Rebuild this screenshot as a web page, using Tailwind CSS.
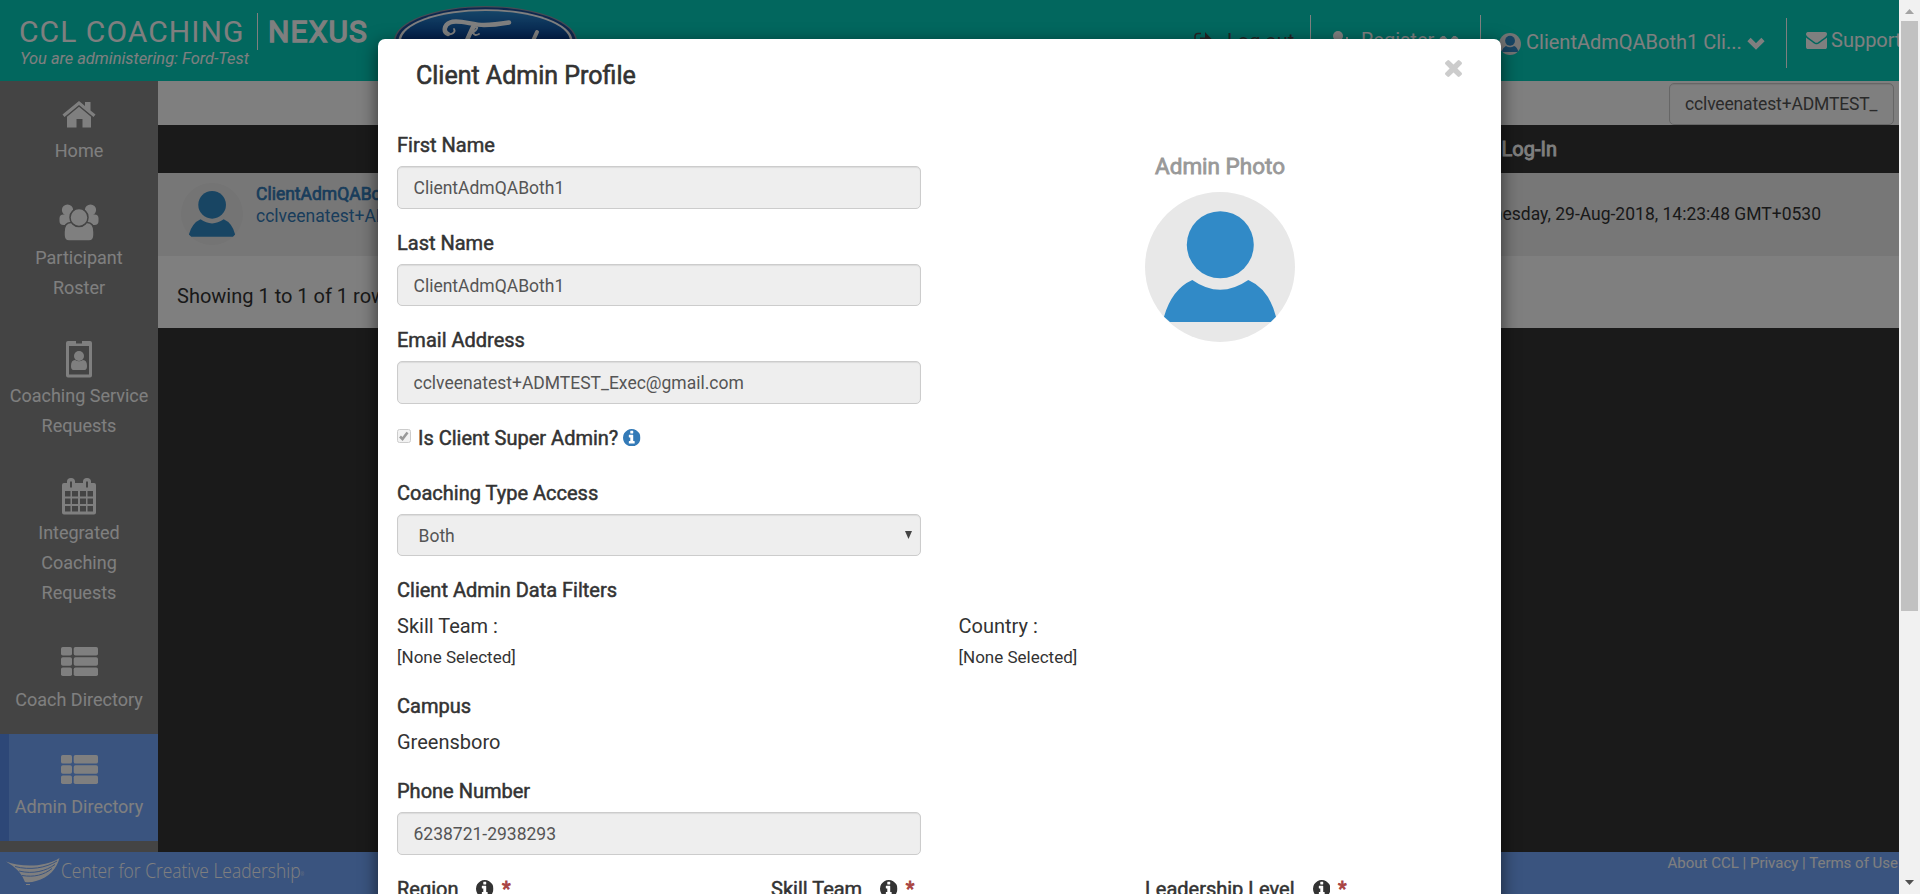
<!DOCTYPE html>
<html lang="en">
<head>
<meta charset="utf-8">
<title>Client Admin Profile</title>
<script src="https://cdn.jsdelivr.net/npm/@tailwindcss/browser@4"></script>
</head>
<body class="flex h-[894px] w-[1920px] overflow-hidden bg-[#343434] text-[#333]" style="font-family:Roboto,sans-serif">
<svg class="hidden">
  <symbol id="info" viewBox="128 128 1536 1536"><path d="M1152 1376v-160q0-14-9-23t-23-9h-96V672q0-14-9-23t-23-9H672q-14 0-23 9t-9 23v160q0 14 9 23t23 9h96v320h-96q-14 0-23 9t-9 23v160q0 14 9 23t23 9h448q14 0 23-9t9-23zm-128-896V320q0-14-9-23t-23-9H800q-14 0-23 9t-9 23v160q0 14 9 23t23 9h192q14 0 23-9t9-23zm640 416q0 209-103 385.500t-279.500 279.500-385.500 103-385.500-103-279.500-279.500-103-385.500 103-385.500 279.500-279.500 385.500-103 385.500 103 279.500 279.500 103 385.500z"/></symbol>
  <symbol id="list" viewBox="0 0 37 29"><rect width="11" height="8.600" rx="1.800"/><rect x="12.700" width="24.300" height="8.600" rx="1.800"/><rect y="10.200" width="11" height="8.600" rx="1.800"/><rect x="12.700" y="10.200" width="24.300" height="8.600" rx="1.800"/><rect y="20.400" width="11" height="8.600" rx="1.800"/><rect x="12.700" y="20.400" width="24.300" height="8.600" rx="1.800"/></symbol>
  <symbol id="person" viewBox="0 0 150 150"><circle cx="75" cy="75" r="75" fill="#e8e8e8"/><circle cx="75.300" cy="52.700" r="33.500" fill="#318ac7"/><path d="M47.300 88Q75 107.500 103.300 88Q124 97 131 124.700L125.700 130H25L19 124.700Q27 97 47.300 88Z" fill="#318ac7"/></symbol>
  <symbol id="chevron" viewBox="0 0 18 13"><path d="M2 2.500L9 9.500L16 2.500" fill="none" stroke="currentColor" stroke-width="4.600"/></symbol>
</svg>

<div class="relative h-full w-[1899px] shrink-0 overflow-hidden">
  <div class="flex h-full flex-col">
    <!-- Top bar -->
    <header class="flex h-[81px] shrink-0 bg-[#04cebd] text-white">
      <div class="w-[394px] shrink-0 pl-[19px] pt-[13px]">
        <div class="flex h-[37px] items-center whitespace-nowrap text-[30px]">
          <span class="w-[238px] tracking-[1.05px]">CCL COACHING</span>
          <span class="h-[37px] w-px bg-white"></span>
          <span class="pl-[10px] tracking-[1.1px] [-webkit-text-stroke:1.3px_white]">NEXUS</span>
        </div>
        <div class="-mt-px pl-px text-[16.4px] leading-[20px] italic">You are administering: Ford-Test</div>
      </div>
      <svg class="mt-[6px] h-[70px] w-[183px] shrink-0" viewBox="0 0 183 70">
        <defs><linearGradient id="fg" x1="0" y1="0" x2="0" y2="1"><stop offset="0" stop-color="#2a8ad0"/><stop offset=".5" stop-color="#043a90"/><stop offset="1" stop-color="#012a6c"/></linearGradient></defs>
        <ellipse cx="91.500" cy="35" rx="91.500" ry="35" fill="#8d95a8"/>
        <ellipse cx="91.500" cy="35" rx="90" ry="33.800" fill="#1c4f9c"/>
        <ellipse cx="91.500" cy="35" rx="87" ry="31.800" fill="#fff"/>
        <ellipse cx="91.500" cy="35" rx="84.500" ry="30" fill="url(#fg)"/>
        <g fill="none" stroke="#fff" stroke-linecap="round">
          <path d="M54 28C49 26 50 19 56 16.500C64 13 78 19 90 19C99 19 106 18 115 16.500" stroke-width="4.500"/>
          <path d="M54 28C58 29 62 26 60 23" stroke-width="1.800"/>
          <path d="M80 19C76 26 72 38 66 50" stroke-width="4.500"/>
          <path d="M74 29C80 27 86 21 82 21C78 23 78 32 85 28" stroke-width="1.800"/>
          <path d="M143 26L132 50" stroke-width="4"/>
        </g>
      </svg>
      <nav class="ml-[617px] flex whitespace-nowrap text-[20px] leading-[30px]">
        <div class="flex w-[116px] shrink-0 pt-[26px] text-[#4a4a4a]">
          <svg class="mt-[6px] h-[18px] w-[20px] shrink-0" viewBox="0 0 20 18"><path d="M7 1.500H4Q1 1.500 1 4.500V13Q1 16 4 16H7" fill="none" stroke="currentColor" stroke-width="1.600"/><path d="M11 0L19 8.500L11 17V12H6V5.500H11Z" fill="currentColor"/></svg>
          <span class="ml-[13px]">Log out</span>
        </div>
        <div class="mt-[15px] flex h-[50px] w-[170px] shrink-0 border-l border-white pt-[10px]">
          <svg class="ml-[22px] mt-[6px] h-[18px] w-[22px] shrink-0" viewBox="0 0 22 18" fill="currentColor"><circle cx="5" cy="5" r="5"/><path d="M0 18Q0 10 5 10T11 18ZM13 6H15V9H18V11H15V14H13V11H10V9H13Z"/></svg>
          <span class="ml-[6px]">Register</span>
          <svg class="ml-[5px] mt-[11px] h-[13px] w-[20px] shrink-0" viewBox="0 0 20 13"><path d="M1.500 3.500L4.500 1L10 7L15.500 1L18.500 3.500" fill="none" stroke="currentColor" stroke-width="3"/></svg>
        </div>
        <div class="mt-[15px] flex h-[50px] w-[306px] shrink-0 border-l border-white pt-[12px]">
          <svg class="ml-[18px] mt-[6px] h-[22px] w-[22px] shrink-0"><use href="#person"/></svg>
          <span class="ml-[5px]">ClientAdmQABoth1 Cli...</span>
          <svg class="ml-[5px] mt-[10px] h-[13px] w-[18px] shrink-0"><use href="#chevron"/></svg>
        </div>
        <div class="mt-[18px] flex h-[50px] w-[113px] shrink-0 border-l border-white pt-[7px]">
          <svg class="ml-[19px] mt-[7px] h-[17px] w-[21px] shrink-0" viewBox="0 256 1792 1408" preserveAspectRatio="none" fill="currentColor"><path d="M1792 710v794q0 66-47 113t-113 47H160q-66 0-113-47T0 1504V710q44 49 101 87 362 246 497 345 57 42 92.500 65.500t94.500 48 110 24.500h2q51 0 110-24.500t94.500-48 92.500-65.500q170-123 498-345 57-39 100-87zm0-294q0 79-49 151t-122 123q-376 261-468 325-10 7-42.500 31t-54 38.500-52 32.500-57.500 27-50 9h-2q-23 0-50-9t-57.500-27-52-32.500-54-38.500-42.500-31q-91-64-262-182.500T172 690q-62-42-117-115.500T0 438q0-78 41.500-130T160 256h1472q65 0 112.500 47t47.500 113z"/></svg>
          <span class="ml-[4px]">Support</span>
        </div>
      </nav>
    </header>

    <div class="flex h-[771px] shrink-0">
      <!-- Side navigation -->
      <aside class="flex w-[158px] shrink-0 flex-col bg-[#888] text-center text-[18px] leading-[30px] text-white">
        <a class="flex flex-col items-center pb-[19px] pt-[13px]">
          <svg class="mb-[2px] h-[40px] w-[34px]" viewBox="0 -7 34 40" fill="currentColor"><path d="M17 0L23 5V1H28.500V9.500L33.500 13.500L31.500 16L17 4L2.500 16L.5 13.500Z"/><path d="M17 5.800L29 15.800V26.500H20.500V18H14.500V26.500H5V15.800Z"/></svg>
          <span>Home</span>
        </a>
        <a class="flex flex-col items-center pb-[19px] pt-[17px]">
          <svg class="mb-[1px] h-[40px] w-[40px]" viewBox="0 -2 40 40"><g fill="currentColor"><circle cx="8.500" cy="6" r="5.600"/><circle cx="31.500" cy="6" r="5.600"/><rect x=".5" y="10.500" width="13" height="10.500" rx="4"/><rect x="26.500" y="10.500" width="13" height="10.500" rx="4"/></g><g fill="currentColor" stroke="#888" stroke-width="1.500"><path d="M5 31V28Q5 18.500 12 18.500H28Q35 18.500 35 28V31Q35 37 30 37H10Q5 37 5 31Z"/><circle cx="20" cy="13.500" r="9"/></g></svg>
          <span>Participant<br>Roster</span>
        </a>
        <a class="flex flex-col items-center pb-[19px] pt-[17px]">
          <svg class="mb-[2px] h-[40px] w-[26px]" viewBox="0 -2 26 40"><path fill="currentColor" fill-rule="evenodd" d="M2 0H10V2.500H16V0H24Q26 0 26 2V34.500Q26 36.500 24 36.500H2Q0 36.500 0 34.500V2Q0 0 2 0ZM3 5V33.500H23V5Z"/><circle cx="13" cy="15" r="5" fill="currentColor"/><path fill="currentColor" d="M5 25Q5 19 9 19Q13 21.500 17 19Q21 19 21 25Q21 29 18.500 29H7.500Q5 29 5 25Z"/></svg>
          <span>Coaching Service<br>Requests</span>
        </a>
        <a class="flex flex-col items-center pb-[18px] pt-[16px]">
          <svg class="mb-[1px] h-[40px] w-[34px]" viewBox="0 -2 34 40"><path fill="currentColor" fill-rule="evenodd" d="M2 5H5V3.500Q5 0 9 0T13 3.500V5H21V3.500Q21 0 25 0T29 3.500V5H32Q34 5 34 7V34.500Q34 36.500 32 36.500H2Q0 36.500 0 34.500V7Q0 5 2 5ZM8 3.500V9.500H10V3.500ZM24 3.500V9.500H26V3.500ZM3 13V18.500H8.500V13ZM10 13V18.500H16V13ZM18 13V18.500H24V13ZM25.500 13V18.500H31V13ZM3 20.500V26H8.500V20.500ZM10 20.500V26H16V20.500ZM18 20.500V26H24V20.500ZM25.500 20.500V26H31V20.500ZM3 28V33.500H8.500V28ZM10 28V33.500H16V28ZM18 28V33.500H24V28ZM25.500 28V33.500H31V28Z"/></svg>
          <span class="pt-px">Integrated<br>Coaching<br>Requests</span>
        </a>
        <a class="flex flex-col items-center pb-[19px] pt-[21px]">
          <svg class="mb-[9px] h-[29px] w-[37px]" fill="currentColor"><use href="#list"/></svg>
          <span>Coach Directory</span>
        </a>
        <a class="flex h-[107px] flex-col items-center border-l-9 border-[#5a8fee] bg-[#74a8fe] pr-[9px] pt-[21px]">
          <svg class="mb-[8px] h-[29px] w-[37px] shrink-0" fill="currentColor"><use href="#list"/></svg>
          <span>Admin Directory</span>
        </a>
      </aside>

      <!-- Directory table -->
      <main class="flex-1">
        <div class="flex h-[44px] justify-end bg-white pr-[5px] pt-[2px]">
          <div class="flex h-[42px] w-[225px] items-center rounded-[5px] border border-[#ccc] pl-[15px] text-[17.5px] tracking-[-0.15px] text-[#555] shadow-[inset_0_1px_1px_rgba(0,0,0,.08)]">cclveenatest+ADMTEST_</div>
        </div>
        <div class="flex h-[48px] items-center justify-end bg-[#343434] pr-[342px] text-[20px] text-white"><span class="[-webkit-text-stroke:0.8px_white]">Last Log-In</span></div>
        <div class="flex h-[83px] bg-[#efefef] pl-[23px] text-[17.5px]">
          <svg class="mt-[10px] h-[62px] w-[62px]"><use href="#person"/></svg>
          <div class="ml-[13px] mt-[10px] leading-[22px] text-[#337ab7]"><div class="[-webkit-text-stroke:0.7px_#337ab7]">ClientAdmQABoth1</div><div>cclveenatest+ADMTEST_Exec@gmail.com</div></div>
          <div class="ml-auto pr-[78px] pt-[30px] leading-[22px]">Wednesday, 29-Aug-2018, 14:23:48 GMT+0530</div>
        </div>
        <div class="h-[72px] bg-white pl-[19px] pt-[25px] text-[20px] leading-[30px]">Showing 1 to 1 of 1 rows</div>
      </main>
    </div>

    <!-- Footer -->
    <footer class="flex h-[42px] shrink-0 justify-between bg-[#74a8fe] text-white">
      <div class="flex pl-[6px]">
        <svg class="mt-[6px] h-[28px] w-[54px]" viewBox="0 0 54 28"><path fill="currentColor" d="M0 3.500C14 9 38 10 53.500 0C51 10 43 20 30 23Q24 25 19 24Q15 12 0 3.500Z"/><g fill="none" stroke="#74a8fe"><path d="M9 8.500C24 12.500 40 10 51 3"/><path d="M13 13C27 16.500 40 13 49 6.500"/><path d="M16 17.500C28 19.500 38 17 46 10.500"/></g><path stroke="currentColor" d="M20 26.500H24"/></svg>
        <span class="ml-px mt-[3px] inline-block h-[30px] origin-left scale-x-[.85] text-[20.5px] leading-[30px] font-light whitespace-nowrap" style="font-family:'Open Sans',sans-serif">Center for Creative Leadership<sup class="text-[5px]">®</sup></span>
      </div>
      <div class="pr-[1px] pt-[1px] text-[15px] leading-[20px]">About CCL | Privacy | Terms of Use</div>
    </footer>
  </div>

  <!-- Dimmed backdrop -->
  <div class="absolute inset-0 bg-black/50"></div>

  <!-- Profile dialog -->
  <section class="absolute left-[378px] top-[39px] h-[900px] w-[1123px] rounded-[7px] bg-white px-[19px] shadow-[0_5px_18px_rgba(0,0,0,.6)]">
    <div class="flex justify-between pl-[19px] pr-[20px] pt-[18px]">
      <h1 class="text-[25px] leading-[37px] [-webkit-text-stroke:0.6px_#333]">Client Admin Profile</h1>
      <svg class="mt-[3px] h-[17px] w-[17px] text-[#ccc]" viewBox="302 366 1188 1188" fill="currentColor"><path d="M1490 1322q0 40-28 68l-136 136q-28 28-68 28t-68-28l-294-294-294 294q-28 28-68 28t-68-28l-136-136q-28-28-28-68t28-68l294-294-294-294q-28-28-28-68t28-68l136-136q28-28 68-28t68 28l294 294 294-294q28-28 68-28t68 28l136 136q28 28 28 68t-28 68l-294 294 294 294q28 28 28 68z"/></svg>
    </div>
    <div class="flex pt-[36px]">
      <div class="w-[524px] text-[20px] leading-[30px]">
        <div class="[-webkit-text-stroke:0.5px_#333]">First Name</div>
        <div class="mt-[6px] flex h-[42.5px] items-center rounded-[5px] border border-[#ccc] bg-[#eee] pl-[15.5px] pt-[2px] text-[17.5px] text-[#555] shadow-[inset_0_1px_1px_rgba(0,0,0,.08)]">ClientAdmQABoth1</div>
        <div class="mt-[19px] [-webkit-text-stroke:0.5px_#333]">Last Name</div>
        <div class="mt-[6px] flex h-[42.5px] items-center rounded-[5px] border border-[#ccc] bg-[#eee] pl-[15.5px] pt-[2px] text-[17.5px] text-[#555] shadow-[inset_0_1px_1px_rgba(0,0,0,.08)]">ClientAdmQABoth1</div>
        <div class="mt-[19px] [-webkit-text-stroke:0.5px_#333]">Email Address</div>
        <div class="mt-[6px] flex h-[42.5px] items-center rounded-[5px] border border-[#ccc] bg-[#eee] pl-[15.5px] pt-[2px] text-[17.5px] text-[#555] shadow-[inset_0_1px_1px_rgba(0,0,0,.08)]">cclveenatest+ADMTEST_Exec@gmail.com</div>
        <div class="mt-[19px] flex">
          <svg class="mt-[6px] h-[14px] w-[14px]" viewBox="0 0 14 14"><rect x=".5" y=".5" width="13" height="13" rx="2" fill="#f2f2f2" stroke="#ccc"/><path d="M3 7.500L5.500 10L10.500 3.500" fill="none" stroke="#999" stroke-width="2.600"/></svg>
          <span class="ml-[7px] [-webkit-text-stroke:0.5px_#333]">Is Client Super Admin?</span>
          <svg class="ml-[5px] mt-[6px] h-[17.500px] w-[17.500px] text-[#337ab7]" fill="currentColor"><use href="#info"/></svg>
        </div>
        <div class="mt-[25px] [-webkit-text-stroke:0.5px_#333]">Coaching Type Access</div>
        <div class="mt-[6px] flex h-[42.5px] items-center justify-between rounded-[5px] border border-[#ccc] bg-[#eee] pl-[20.5px] pr-[8px] pt-[2px] text-[17.5px] text-[#555] shadow-[inset_0_1px_1px_rgba(0,0,0,.08)]"><span>Both</span><svg class="-mt-px h-[8px] w-[7px]" viewBox="0 0 7 8"><path d="M0 0H7L3.500 8Z" fill="#444"/></svg></div>
      </div>
      <div class="ml-[224px] flex w-[150px] flex-col items-center pt-[21px]">
        <div class="whitespace-nowrap text-[22.5px] leading-[30px] text-[#999] [-webkit-text-stroke:0.8px_#999]">Admin Photo</div>
        <svg class="mt-[11px] h-[150px] w-[150px]"><use href="#person"/></svg>
      </div>
    </div>
    <div class="mt-[19px] text-[20px] leading-[30px]">
      <div class="[-webkit-text-stroke:0.5px_#333]">Client Admin Data Filters</div>
      <div class="mt-[6px] grid grid-cols-[561.5px_1fr]">
        <div>Skill Team :<div class="mt-[4px] text-[17px] leading-[24px]">[None Selected]</div></div>
        <div>Country :<div class="mt-[4px] text-[17px] leading-[24px]">[None Selected]</div></div>
      </div>
      <div class="mt-[22px] [-webkit-text-stroke:0.5px_#333]">Campus</div>
      <div class="mt-[6px]">Greensboro</div>
      <div class="mt-[19px] [-webkit-text-stroke:0.5px_#333]">Phone Number</div>
      <div class="mt-[6px] flex h-[42.5px] w-[524px] items-center rounded-[5px] border border-[#ccc] bg-[#eee] pl-[15.5px] pt-[2px] text-[17.5px] text-[#555] shadow-[inset_0_1px_1px_rgba(0,0,0,.08)]">6238721-2938293</div>
      <div class="mt-[19px] grid grid-cols-[374px_374px_1fr]">
        <div class="flex"><span class="[-webkit-text-stroke:0.5px_#333]">Region</span><svg class="ml-[18px] mt-[6px] h-[17.500px] w-[17.500px]" fill="#333"><use href="#info"/></svg><span class="ml-[8px] text-[#a94442] [-webkit-text-stroke:0.8px_#a94442]">*</span></div>
        <div class="flex"><span class="[-webkit-text-stroke:0.5px_#333]">Skill Team</span><svg class="ml-[18px] mt-[6px] h-[17.500px] w-[17.500px]" fill="#333"><use href="#info"/></svg><span class="ml-[8px] text-[#a94442] [-webkit-text-stroke:0.8px_#a94442]">*</span></div>
        <div class="flex"><span class="[-webkit-text-stroke:0.5px_#333]">Leadership Level</span><svg class="ml-[18px] mt-[6px] h-[17.500px] w-[17.500px]" fill="#333"><use href="#info"/></svg><span class="ml-[8px] text-[#a94442] [-webkit-text-stroke:0.8px_#a94442]">*</span></div>
      </div>
    </div>
  </section>
</div>

<!-- Scrollbar -->
<div class="flex w-[21px] shrink-0 flex-col items-center bg-[#f1f1f1]">
  <svg class="h-[21px] w-[9px]" viewBox="0 0 9 21"><path d="M0 14L4.500 9L9 14Z" fill="#a3a3a3"/></svg>
  <div class="h-[590px] w-[17px] bg-[#c1c1c1]"></div>
  <svg class="mt-auto h-[21px] w-[9px]" viewBox="0 0 9 21"><path d="M0 7H9L4.500 12Z" fill="#505050"/></svg>
</div>
</body>
</html>
